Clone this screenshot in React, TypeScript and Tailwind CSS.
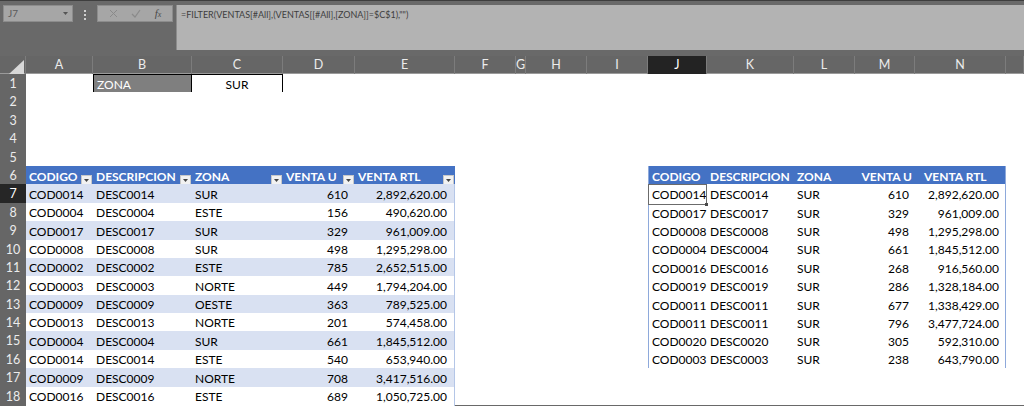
import clsx from 'clsx'

const gridCols =
  'grid grid-cols-[26px_67px_99px_91px_72px_100px_61px_10px_61px_61px_59px_87px_61px_60px_91px_18px]'

const letters = ['A', 'B', 'C', 'D', 'E', 'F', 'G', 'H', 'I', 'J', 'K', 'L', 'M', 'N', '']

const ventas = [
  ['COD0014', 'DESC0014', 'SUR', '610', '2,892,620.00'],
  ['COD0004', 'DESC0004', 'ESTE', '156', '490,620.00'],
  ['COD0017', 'DESC0017', 'SUR', '329', '961,009.00'],
  ['COD0008', 'DESC0008', 'SUR', '498', '1,295,298.00'],
  ['COD0002', 'DESC0002', 'ESTE', '785', '2,652,515.00'],
  ['COD0003', 'DESC0003', 'NORTE', '449', '1,794,204.00'],
  ['COD0009', 'DESC0009', 'OESTE', '363', '789,525.00'],
  ['COD0013', 'DESC0013', 'NORTE', '201', '574,458.00'],
  ['COD0004', 'DESC0004', 'SUR', '661', '1,845,512.00'],
  ['COD0014', 'DESC0014', 'ESTE', '540', '653,940.00'],
  ['COD0009', 'DESC0009', 'NORTE', '708', '3,417,516.00'],
  ['COD0016', 'DESC0016', 'ESTE', '689', '1,050,725.00'],
]

const filtrado = [
  ['COD0014', 'DESC0014', 'SUR', '610', '2,892,620.00'],
  ['COD0017', 'DESC0017', 'SUR', '329', '961,009.00'],
  ['COD0008', 'DESC0008', 'SUR', '498', '1,295,298.00'],
  ['COD0004', 'DESC0004', 'SUR', '661', '1,845,512.00'],
  ['COD0016', 'DESC0016', 'SUR', '268', '916,560.00'],
  ['COD0019', 'DESC0019', 'SUR', '286', '1,328,184.00'],
  ['COD0011', 'DESC0011', 'SUR', '677', '1,338,429.00'],
  ['COD0011', 'DESC0011', 'SUR', '796', '3,477,724.00'],
  ['COD0020', 'DESC0020', 'SUR', '305', '592,310.00'],
  ['COD0003', 'DESC0003', 'SUR', '238', '643,790.00'],
]

const headers = ['CODIGO', 'DESCRIPCION', 'ZONA', 'VENTA U', 'VENTA RTL']

const FilterButton = () => (
  <span className="mr-[1px] mb-[1px] self-end w-[11px] h-[11px] bg-[#f2f2f2] border border-[#c8c8c8] flex items-center justify-center">
    <svg width="5" height="3" viewBox="0 0 5 3">
      <path d="M0 0 L5 0 L2.5 3 Z" fill="#444" />
    </svg>
  </span>
)

const Cell = ({ children, className }: { children?: React.ReactNode; className?: string }) => (
  <div className={clsx('h-full flex items-center pt-[1px] whitespace-nowrap overflow-visible', className)}>
    {children}
  </div>
)

const leftCells = (row: number) => {
  if (row === 6) {
    return headers.map((h) => (
      <Cell key={h} className="bg-[#4472c4] text-white font-bold justify-between pl-[3px]">
        <span>{h}</span>
        <FilterButton />
      </Cell>
    ))
  }
  const d = ventas[row - 7]
  const band = row % 2 === 1 ? 'bg-[#d9e1f2]' : 'bg-white'
  return d.map((v, i) => (
    <Cell
      key={i}
      className={clsx(
        band,
        'border-b border-[#b4c6e7]',
        i >= 3 ? 'justify-end pr-[7px]' : 'pl-[3px]',
        i === 4 && 'border-r border-r-[#b4c6e7]',
      )}
    >
      {v}
    </Cell>
  ))
}

const rightCells = (row: number) => {
  if (row === 6) {
    return headers.map((h, i) => (
      <Cell
        key={h}
        className={clsx(
          'bg-[#4472c4] text-white font-bold',
          i === 3 ? 'justify-end pr-[3px]' : i === 4 ? 'pl-[9px]' : 'pl-[3px]',
          i === 0 && 'border-l border-[#8ea9db]',
          i === 4 && 'border-r border-[#8ea9db]',
        )}
      >
        {h}
      </Cell>
    ))
  }
  const d = filtrado[row - 7]
  return d.map((v, i) => (
    <Cell
      key={i}
      className={clsx(
        'bg-white',
        i >= 3 ? 'justify-end pr-[6px]' : 'pl-[3px]',
        i === 0 && 'border-l border-[#8ea9db]',
        i === 4 && 'border-r border-[#8ea9db]',
        row === 16 && 'border-b border-b-[#8ea9db]',
        row === 7 && i === 0 && 'relative',
      )}
    >
      {v}
      {row === 7 && i === 0 && (
        <div className="absolute inset-0 -left-[1px] border border-[#6b6b6b]">
          <div className="absolute -right-[2px] -bottom-[2px] w-[3px] h-[3px] bg-[#4a4a4a]" />
        </div>
      )}
    </Cell>
  ))
}

const SheetRow = ({ row }: { row: number }) => {
  let cells: React.ReactNode[] = []
  if (row === 1) {
    cells = [
      <Cell key="a" />,
      <Cell key="b" className="bg-[#7f7f7f] text-white pl-[3px] border border-black">
        ZONA
      </Cell>,
      <Cell key="c" className="bg-white justify-center border border-l-0 border-black">
        SUR
      </Cell>,
    ]
    for (let i = 3; i < 15; i++) cells.push(<Cell key={i} />)
  } else if (row >= 6) {
    cells = [...leftCells(row)]
    for (let i = 5; i < 9; i++) cells.push(<Cell key={'g' + i} />)
    if (row <= 16) cells.push(...rightCells(row))
    else for (let i = 9; i < 14; i++) cells.push(<Cell key={'r' + i} />)
    cells.push(<Cell key="o" />)
  } else {
    for (let i = 0; i < 15; i++) cells.push(<Cell key={i} />)
  }

  return (
    <div className={clsx(gridCols, 'h-[18.4px] bg-white')}>
      <div
        className={clsx(
          'h-full flex items-center justify-center pt-[1px] border-b border-[#787878] text-[12.5px]',
          row === 7 ? 'bg-[#262626] text-white' : 'bg-[#666666] text-[#ececec]',
        )}
      >
        {row}
      </div>
      {cells}
    </div>
  )
}

const App = () => {
  const rows = Array.from({ length: 18 }, (_, i) => i + 1)

  return (
    <div className="w-[1024px] h-[406px] overflow-hidden bg-[#696969] font-['Lato',sans-serif] text-[12px] text-black flex flex-col">
      <div className="h-[56px] flex gap-[3px] pl-[3px] border-t border-[#3e3e3e]">
        <div className="mt-[4px] w-[70px] h-[17px] bg-[#a6a6a6] border border-[#8c8c8c] flex items-center justify-between px-[4px] text-[10px] text-[#5a5a5a]">
          <span>J7</span>
          <svg width="5" height="3" viewBox="0 0 5 3">
            <path d="M0 0 L5 0 L2.5 3 Z" fill="#555" />
          </svg>
        </div>
        <div className="mt-[9px] w-[18px] flex flex-col items-center gap-[2px]">
          <span className="w-[2px] h-[2px] bg-[#cfcfcf]" />
          <span className="w-[2px] h-[2px] bg-[#cfcfcf]" />
          <span className="w-[2px] h-[2px] bg-[#cfcfcf]" />
        </div>
        <div className="mt-[4px] w-[76px] h-[17px] bg-[#a6a6a6] border border-[#8c8c8c] flex items-center justify-around px-[4px]">
          <svg width="9" height="9" viewBox="0 0 9 9">
            <path d="M1 1 L8 8 M8 1 L1 8" stroke="#8a8a8a" strokeWidth="1" />
          </svg>
          <svg width="10" height="9" viewBox="0 0 10 9">
            <path d="M1 5 L4 8 L9 1" stroke="#8a8a8a" strokeWidth="1.2" fill="none" />
          </svg>
          <span className="font-['Liberation_Serif',serif] italic text-[11px] text-[#4a4a4a]">
            f<span className="text-[8px]">x</span>
          </span>
        </div>
        <div className="mt-[4px] flex-1 h-[45px] bg-[#b3b3b3] border-l border-[#8c8c8c] pl-[4px] pt-[4px] text-[9px] leading-[12px] text-[#3e3e3e]">
          =FILTER(VENTAS[#All],(VENTAS[[#All],[ZONA]]=$C$1),"")
        </div>
      </div>

      <div className={clsx(gridCols, 'h-[18px] bg-[#666666] border-b border-[#9a9a9a] text-[12.5px] text-[#ececec]')}>
        <div className="flex items-end justify-end pr-[1px] pb-[1px] border-r border-[#7c7c7c]">
          <svg width="15" height="14" viewBox="0 0 15 14">
            <path d="M15 0 L15 14 L0 14 Z" fill="#d8d8d8" />
          </svg>
        </div>
        {letters.map((l, i) => (
          <div
            key={i}
            className={clsx(
              'flex items-center justify-center border-r border-[#7c7c7c]',
              l === 'J' && 'bg-[#232323] text-white',
            )}
          >
            {l}
          </div>
        ))}
      </div>

      {rows.map((r) => (
        <SheetRow key={r} row={r} />
      ))}
    </div>
  )
}

export default App
